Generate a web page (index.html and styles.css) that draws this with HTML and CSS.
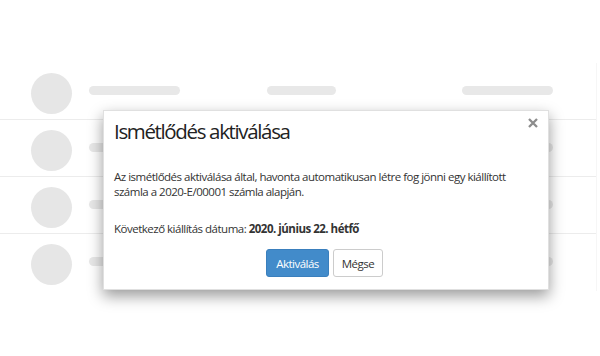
FILE: index.html
```html
<!DOCTYPE html>
<html lang="hu">
<head>
<meta charset="utf-8">
<title>Ismétlődés aktiválása</title>
<link rel="stylesheet" href="styles.css">
</head>
<body>
<div class="list">
  <div class="row"><span class="avatar"></span><span class="bar bar-a"></span><span class="bar bar-b"></span><span class="bar bar-c"></span></div>
  <div class="row"><span class="avatar"></span><span class="bar bar-a"></span><span class="bar bar-b"></span><span class="bar bar-c"></span></div>
  <div class="row"><span class="avatar"></span><span class="bar bar-a"></span><span class="bar bar-b"></span><span class="bar bar-c"></span></div>
  <div class="row row-last"><span class="avatar"></span><span class="bar bar-a"></span><span class="bar bar-b"></span><span class="bar bar-c"></span></div>
</div>

<div class="modal">
  <div class="modal-header">
    <h4 class="modal-title">Ismétlődés aktiválása</h4>
    <button class="close" type="button" aria-label="Bezár">
      <svg width="10" height="10" viewBox="0 0 10 10"><path d="M1 1L9 9M9 1L1 9" stroke="#8c8c8c" stroke-width="2.3" stroke-linecap="butt"/></svg>
    </button>
  </div>
  <div class="modal-body">
    <p class="intro">Az ismétlődés aktiválása által, havonta automatikusan létre fog jönni egy kiállított számla a 2020-E/00001 számla alapján.</p>
    <p>Következő kiállítás dátuma: <strong>2020. június 22. hétfő</strong></p>
  </div>
  <div class="modal-footer">
    <button class="btn btn-primary" type="button">Aktiválás</button>
    <button class="btn btn-default" type="button">Mégse</button>
  </div>
</div>
</body>
</html>
```

FILE: styles.css
```css
html, body {
  margin: 0;
  padding: 0;
  background: #fff;
  font-family: "Open Sans", "Noto Sans", sans-serif;
  color: #333;
}

.list {
  margin-top: 63px;
  width: 596px;
  border-right: 1px solid #f6f6f6;
}

.row {
  display: flex;
  align-items: flex-start;
  height: 57px;
  box-sizing: border-box;
  padding: 10px 0 0 31px;
  border-bottom: 1px solid #ececec;
}

.row-last {
  border-bottom: none;
}

.avatar {
  width: 41px;
  height: 41px;
  border-radius: 50%;
  background: #e6e6e6;
  flex: none;
}

.bar {
  height: 9px;
  border-radius: 5px;
  background: #e8e8e8;
  margin-top: 13px;
  flex: none;
}

.bar-a { width: 91px; margin-left: 17px; }
.bar-b { width: 69px; margin-left: 87px; }
.bar-c { width: 91px; margin-left: 126px; }

.modal {
  position: absolute;
  left: 103px;
  top: 110px;
  width: 446px;
  box-sizing: border-box;
  background: #fff;
  border: 1px solid rgba(0, 0, 0, 0.12);
  box-shadow: 0 6px 14px rgba(0, 0, 0, 0.4);
  padding: 0 10px 12px;
}

.modal-header {
  display: flex;
  justify-content: space-between;
  align-items: flex-start;
  padding-top: 9px;
}

.modal-title {
  margin: 0;
  font-size: 20.5px;
  line-height: 22px;
  font-weight: 400;
  letter-spacing: -1.35px;
  color: #222;
}

.close {
  border: 0;
  background: none;
  padding: 0;
  margin: -2px 0 0 0;
  width: 10px;
  height: 10px;
  display: block;
  cursor: pointer;
}

.close svg {
  display: block;
}

.modal-body {
  padding-top: 27px;
  font-size: 11.5px;
  line-height: 15px;
  letter-spacing: -0.5px;
}

.modal-body p {
  margin: 0 0 22px;
}

.modal-body .intro {
  max-width: 405px;
}

.modal-body p:last-child {
  margin-bottom: 0;
}

.modal-body strong {
  font-weight: 700;
}

.modal-footer {
  display: flex;
  justify-content: center;
  gap: 4px;
  padding: 13px 3px 0 0;
}

.btn {
  height: 28px;
  box-sizing: border-box;
  font-family: inherit;
  font-size: 11.5px;
  letter-spacing: -0.5px;
  border-radius: 3px;
  padding: 0;
  cursor: pointer;
}

.btn-primary {
  width: 63px;
  background: #428bca;
  border: 1px solid #3a7fbd;
  color: #fff;
}

.btn-default {
  width: 50px;
  background: #fff;
  border: 1px solid #ccc;
  color: #333;
}
```
